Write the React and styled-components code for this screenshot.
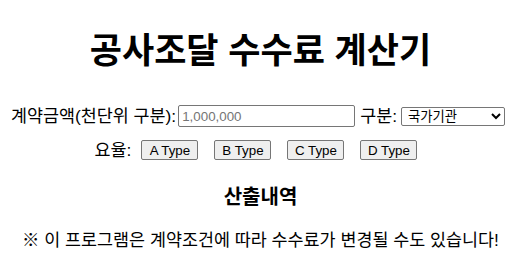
import React from "react";
import styled, { createGlobalStyle } from "styled-components";

const Global = createGlobalStyle`
  html, body { margin: 0; padding: 0; background: #fff; }
  body {
    font-family: "Liberation Sans", "Noto Sans CJK KR", Arial, sans-serif;
    color: #000;
    font-size: 16px;
  }
`;

const Page = styled.div`
  display: flex;
  flex-direction: column;
  align-items: center;
  padding: 0 8px;
  text-align: center;
`;

const Title = styled.h1`
  font-size: 35px;
  font-weight: 700;
  line-height: 44px;
  margin: 29px 0 0;
`;

const Row = styled.div`
  display: flex;
  justify-content: center;
  align-items: center;
  height: ${(p) => p.$height}px;
  margin-top: ${(p) => p.$top}px;
  padding-right: ${(p) => p.$trail}px;
`;

const Label = styled.label`
  font-size: 17.4px;
  line-height: 22px;
  margin-right: ${(p) => p.$right ?? 3}px;
  margin-left: ${(p) => p.$left ?? 0}px;
`;

const TextInput = styled.input`
  width: 177px;
  height: 22px;
  box-sizing: border-box;
  border: 1px solid #767676;
  border-radius: 2px;
  padding: 1px 3px;
  font: 13.33px "Liberation Sans", Arial, sans-serif;
  color: #000;
  &::placeholder { color: #757575; }
`;

const Select = styled.select`
  width: 104px;
  height: 19px;
  box-sizing: border-box;
  border: 1px solid #767676;
  border-radius: 2px;
  padding: 0 2px;
  font: 13.33px "Liberation Sans", "Noto Sans CJK KR", Arial, sans-serif;
  background: #fff;
  color: #000;
`;

const TypeButton = styled.button`
  font: 13.33px "Liberation Sans", Arial, sans-serif;
  height: 20px;
  width: 57px;
  padding: 0;
  border: 1px solid #767676;
  border-radius: 2px;
  background: #efefef;
  color: #000;
  & + & { margin-left: 16px; }
`;

const SubTitle = styled.h3`
  font-size: 20px;
  font-weight: 700;
  line-height: 24px;
  margin: 24px 0 0;
`;

const Note = styled.p`
  font-size: 17.4px;
  line-height: 22px;
  margin: 20px 0 0;
`;

export default function App() {
  return (
    <Page>
      <Global />
      <Title>공사조달 수수료 계산기</Title>
      <Row $height={24} $top={31} $trail={5}>
        <Label $right={2}>계약금액(천단위 구분):</Label>
        <TextInput placeholder="1,000,000" />
        <Label $left={5} $right={4}>구분:</Label>
        <Select defaultValue="국가기관">
          <option>국가기관</option>
          <option>지방자치단체</option>
          <option>공공기관</option>
        </Select>
      </Row>
      <Row $height={22} $top={11} $trail={9}>
        <Label $right={10}>요율:</Label>
        <TypeButton>A Type</TypeButton>
        <TypeButton>B Type</TypeButton>
        <TypeButton>C Type</TypeButton>
        <TypeButton>D Type</TypeButton>
      </Row>
      <SubTitle>산출내역</SubTitle>
      <Note>※ 이 프로그램은 계약조건에 따라 수수료가 변경될 수도 있습니다!</Note>
    </Page>
  );
}
